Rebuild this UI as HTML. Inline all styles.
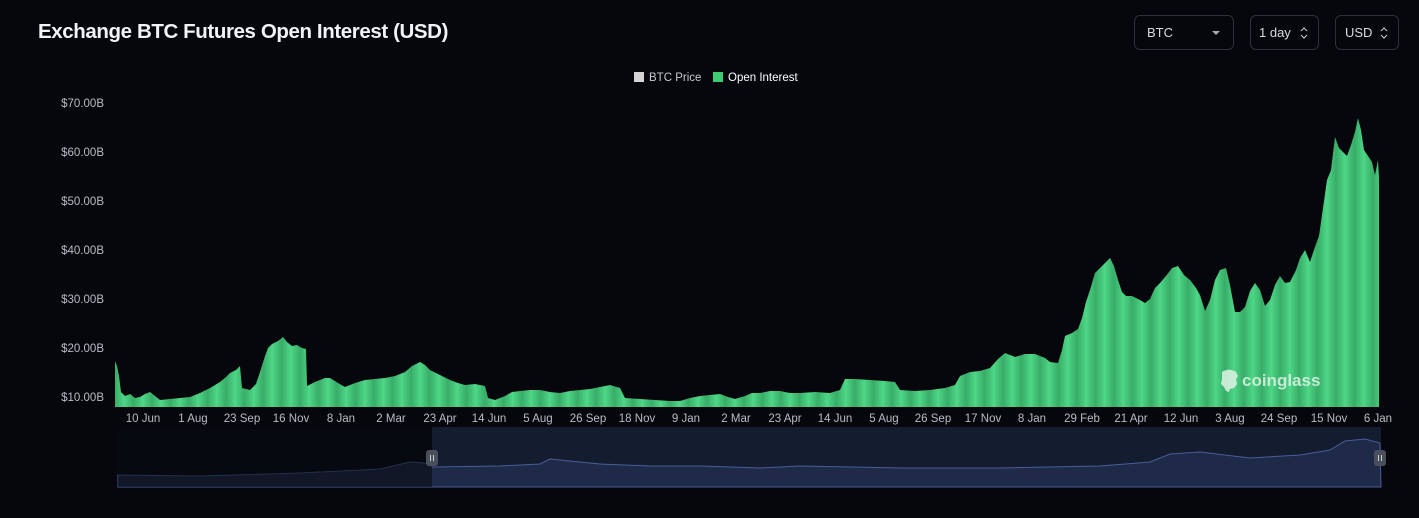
<!DOCTYPE html>
<html><head><meta charset="utf-8"><style>
html,body{margin:0;padding:0;background:#05070c;width:1419px;height:518px;overflow:hidden;font-family:"Liberation Sans",Arial,sans-serif}
.title{position:absolute;left:38px;top:20px;color:#f2f3f5;font-size:20.5px;font-weight:bold;letter-spacing:-0.4px}
.sel{position:absolute;top:15px;height:35px;border:1px solid #2e3138;border-radius:6px;box-sizing:border-box;color:#d8dade;font-size:13px;line-height:33px;padding-left:12px}
.ylab{position:absolute;right:1315px;color:#b9bcc2;font-size:11.5px;text-align:right}
.xlab{position:absolute;top:413px;color:#b9bcc2;font-size:11.5px;transform:translateX(-50%);white-space:nowrap}
.leg{position:absolute;top:72px;font-size:11.5px;color:#c8cacf}
.sq{display:inline-block;width:10px;height:10px;vertical-align:-1px;margin-right:5px}
</style></head><body>
<div class="title">Exchange BTC Futures Open Interest (USD)</div>
<div class="sel" style="left:1134px;width:100px">BTC<svg style="position:absolute;right:13px;top:15px" width="8" height="5"><path d="M0 0L8 0L4 4Z" fill="#aaa"/></svg></div>
<div class="sel" style="left:1250px;width:69px;padding-left:8px">1 day<svg style="position:absolute;right:10px;top:11px" width="8" height="12"><path d="M1 4L4 1L7 4M1 8L4 11L7 8" stroke="#bbb" fill="none" stroke-width="1.2"/></svg></div>
<div class="sel" style="left:1335px;width:64px;padding-left:9px">USD<svg style="position:absolute;right:10px;top:11px" width="8" height="12"><path d="M1 4L4 1L7 4M1 8L4 11L7 8" stroke="#bbb" fill="none" stroke-width="1.2"/></svg></div>
<div class="leg" style="left:634px"><span class="sq" style="background:#d4d4d6"></span>BTC Price</div>
<div class="leg" style="left:713px;color:#fff"><span class="sq" style="background:#3dcb74"></span>Open Interest</div>
<div class="ylab" style="top:98px">$70.00B</div>
<div class="ylab" style="top:147px">$60.00B</div>
<div class="ylab" style="top:196px">$50.00B</div>
<div class="ylab" style="top:245px">$40.00B</div>
<div class="ylab" style="top:294px">$30.00B</div>
<div class="ylab" style="top:343px">$20.00B</div>
<div class="ylab" style="top:392px">$10.00B</div>
<svg style="position:absolute;left:0;top:0" width="1419" height="518">
<defs>
<linearGradient id="st" x1="0" x2="1" y1="0" y2="0">
<stop offset="0" stop-color="#38ad68"/><stop offset="0.5" stop-color="#4ed686"/><stop offset="1" stop-color="#38ad68"/></linearGradient>
<pattern id="pt" patternUnits="userSpaceOnUse" width="18.5" height="10" x="115"><rect width="18.5" height="10" fill="url(#st)"/></pattern>
</defs>
<polygon fill="url(#pt)" points="115,407 115,361 117,366 119,376 121,392 125,396 130,394 135,398 140,397 145,394 150,392 155,396 160,400 170,399 180,398 190,397 200,393 210,388 220,382 226,377 230,373 236,370 240,366 242,388 250,390 256,384 260,372 265,356 268,348 272,344 278,341 283,337 287,342 292,346 297,345 302,348 306,349 307,386 315,382 320,380 325,378 330,378 338,383 345,387 355,383 365,380 375,379 385,378 395,376 405,372 412,366 420,362 425,365 430,370 440,375 450,380 458,383 465,385 475,384 485,386 488,398 495,400 505,396 512,392 520,391 530,390 540,390 550,392 560,393 570,391 580,390 590,389 600,387 610,385 620,388 625,398 640,399 655,400 670,401 680,401 690,398 700,396 710,395 720,394 728,397 735,399 745,396 752,393 760,393 770,391 780,391 790,393 800,393 815,392 830,393 840,390 845,379 855,379 870,380 885,381 895,382 900,390 915,391 930,390 945,388 955,385 960,376 970,372 980,371 990,368 998,359 1005,353 1015,357 1025,354 1035,354 1045,358 1050,362 1058,363 1062,350 1065,336 1072,333 1078,329 1082,318 1086,302 1090,290 1095,273 1100,268 1106,262 1110,258 1114,266 1118,280 1122,292 1126,296 1132,296 1140,300 1145,303 1150,299 1155,288 1160,283 1166,276 1172,268 1178,266 1184,275 1190,280 1196,288 1200,295 1205,311 1210,300 1215,280 1220,270 1226,268 1230,285 1235,312 1240,312 1245,307 1250,291 1255,283 1260,290 1265,306 1270,300 1275,285 1280,276 1285,283 1290,282 1296,270 1300,258 1305,250 1310,262 1315,247 1319,236 1323,208 1327,180 1331,170 1335,137 1339,148 1343,152 1347,156 1351,145 1355,132 1358,118 1361,130 1364,150 1368,156 1372,162 1375,175 1378,160 1379,178 1379,407"/>
<rect x="118" y="427" width="314" height="60" fill="#080c16"/>
<rect x="432" y="427" width="949" height="60" fill="#141c30"/>
<polygon fill="#1f2a48" stroke="#4a5d99" stroke-width="1" points="118,475 200,476 300,473 380,469 410,462 425,463 432,467 500,466 540,464 550,459 600,464 650,466 700,466 760,468 800,466 900,468 1000,468 1100,466 1150,462 1170,454 1200,452 1250,458 1300,455 1330,450 1345,441 1365,439 1380,443 1381,487 118,487"/>
<rect x="118" y="427" width="314" height="60" fill="#05070c" opacity="0.55"/>
<rect x="426" y="450" width="12" height="16" rx="3" fill="#4a4f5c"/>
<path d="M430.5 455v6M433.5 455v6" stroke="#ccc"/>
<rect x="1374" y="450" width="12" height="16" rx="3" fill="#4a4f5c"/>
<path d="M1378.5 455v6M1381.5 455v6" stroke="#ccc"/>
<text x="1242" y="386" font-family="Liberation Sans" font-weight="bold" font-size="17" fill="#d6efe0" opacity="0.9">coinglass</text>
<path d="M1222 372c4-3 10-3 14 0l2 4-2 3 1 5-3 4-4 1-1 3-3-1-2-4-3-3 1-5z" fill="#d6efe0" opacity="0.9"/>
</svg>
<div class="xlab" style="left:143px">10 Jun</div>
<div class="xlab" style="left:193px">1 Aug</div>
<div class="xlab" style="left:242px">23 Sep</div>
<div class="xlab" style="left:291px">16 Nov</div>
<div class="xlab" style="left:341px">8 Jan</div>
<div class="xlab" style="left:391px">2 Mar</div>
<div class="xlab" style="left:440px">23 Apr</div>
<div class="xlab" style="left:489px">14 Jun</div>
<div class="xlab" style="left:538px">5 Aug</div>
<div class="xlab" style="left:588px">26 Sep</div>
<div class="xlab" style="left:637px">18 Nov</div>
<div class="xlab" style="left:686px">9 Jan</div>
<div class="xlab" style="left:736px">2 Mar</div>
<div class="xlab" style="left:785px">23 Apr</div>
<div class="xlab" style="left:835px">14 Jun</div>
<div class="xlab" style="left:884px">5 Aug</div>
<div class="xlab" style="left:933px">26 Sep</div>
<div class="xlab" style="left:983px">17 Nov</div>
<div class="xlab" style="left:1032px">8 Jan</div>
<div class="xlab" style="left:1082px">29 Feb</div>
<div class="xlab" style="left:1131px">21 Apr</div>
<div class="xlab" style="left:1181px">12 Jun</div>
<div class="xlab" style="left:1230px">3 Aug</div>
<div class="xlab" style="left:1279px">24 Sep</div>
<div class="xlab" style="left:1329px">15 Nov</div>
<div class="xlab" style="left:1378px">6 Jan</div>
</body></html>
